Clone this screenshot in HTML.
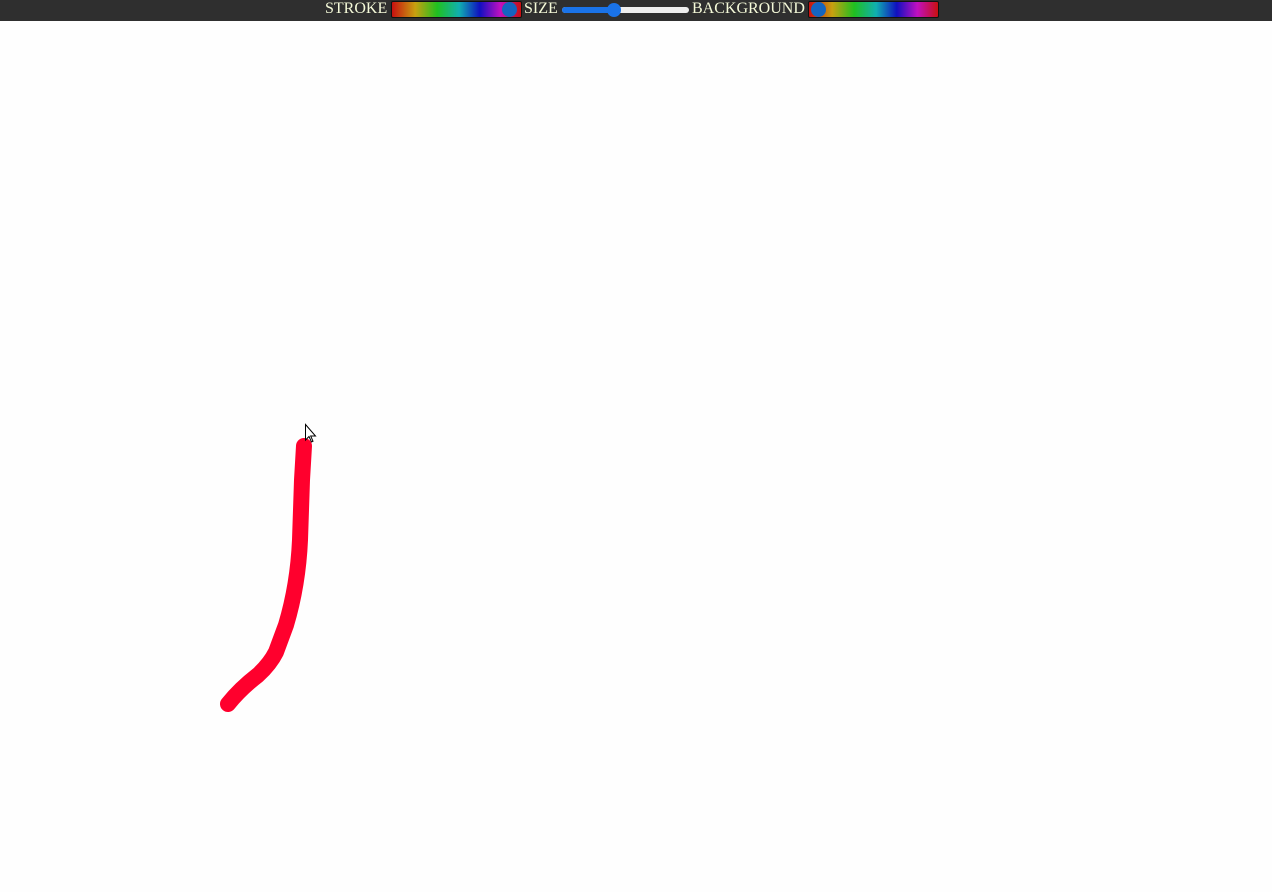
<!DOCTYPE html>
<html><head><meta charset="utf-8"><style>
html,body{margin:0;padding:0;width:1272px;height:892px;background:#fefefe;overflow:hidden;font-family:"Liberation Serif",serif}
.bar{position:absolute;left:0;top:0;width:1272px;height:21px;background:#2f2f2f}
.t{position:absolute;top:0;color:#f4f9d8;font-size:16px;line-height:18px}
.g{position:absolute;top:1px;height:17px;border:1px solid #111;border-radius:2px;box-sizing:border-box;
background:linear-gradient(90deg,#c81010 0%,#c8a010 18%,#20c020 35%,#10b0b0 52%,#1010c0 68%,#c010c0 84%,#c81010 100%)}
.h{position:absolute;top:2px;width:15px;height:15px;border-radius:50%;background:#1565c0}
.tr{position:absolute;top:7px;left:562px;width:127px;height:6px;border-radius:3px;background:#efefef}
.tf{position:absolute;top:7px;left:562px;width:52px;height:6px;border-radius:3px;background:#1a73e8}
.th{position:absolute;top:3px;left:607px;width:14px;height:14px;border-radius:50%;background:#1a73e8}
</style></head><body>
<div class="bar">
<div class="t" style="left:325px">STROKE</div>
<div class="g" style="left:391px;width:131px"></div>
<div class="h" style="left:502px"></div>
<div class="t" style="left:524px">SIZE</div>
<div class="tr"></div><div class="tf"></div><div class="th"></div>
<div class="t" style="left:692px">BACKGROUND</div>
<div class="g" style="left:808px;width:131px"></div>
<div class="h" style="left:811px"></div>
</div>
<svg width="1272" height="892" style="position:absolute;left:0;top:0">
<path d="M304 446 L302 480 L300 540 Q298 585 286 625 L276 652 Q270 664 258 675 Q240 689 228 704" fill="none" stroke="#ff002d" stroke-width="16" stroke-linecap="round" stroke-linejoin="round"/>
<path d="M305.5 424.5 L305.5 440 L309 436.5 L311.5 442 L313 441.3 L310.7 436 L315.5 436 Z" fill="#fff" stroke="#000" stroke-width="1"/>
</svg>
</body></html>
